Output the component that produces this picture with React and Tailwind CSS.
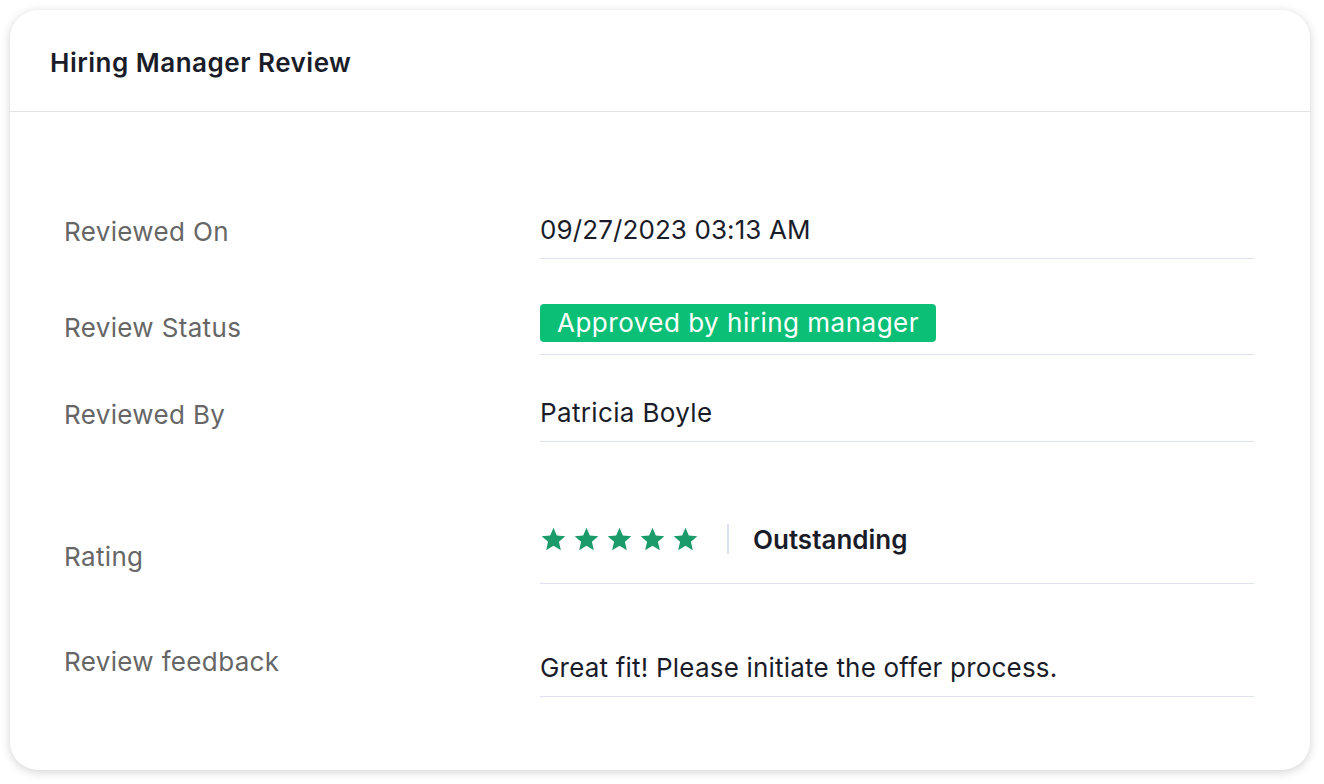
const Star = () => (
  <svg width="27" height="26" viewBox="0 0 24 24" fill="#1b9a6a">
    <path d="M12 1.5l3.1 7.2 7.8.7-5.9 5.2 1.8 7.7L12 18.2l-6.8 4.1 1.8-7.7L1.1 9.4l7.8-.7z" />
  </svg>
);

export default function App() {
  return (
    <div className="w-[1324px] h-[784px] bg-white p-[10px] font-['Inter',sans-serif]">
      <div className="w-[1300px] h-[760px] bg-white rounded-[28px] shadow-[0_2px_10px_rgba(0,0,0,0.18)] overflow-hidden">
        {/* Header */}
        <div className="h-[102px] border-b border-[#e3e3e3] px-[40px] pt-[4px] flex items-center">
          <h1 className="text-[26px] font-semibold text-[#1a1d29] tracking-[0.5px]">Hiring Manager Review</h1>
        </div>

        {/* Body */}
        <div className="pt-[88px] pl-[54px] pr-[56px] text-[26px] tracking-[0.35px]">
          <div className="flex">
            <div className="w-[476px] pt-[16px] leading-[32px] text-[#666]">Reviewed On</div>
            <div className="flex-1 pt-[14px] pb-[12px] border-b border-[#dde2ee] leading-[32px] text-[#1a1d29] tracking-[0.1px]">
              09/27/2023 03:13 AM
            </div>
          </div>

          <div className="flex">
            <div className="w-[476px] pt-[53px] leading-[32px] text-[#666]">Review Status</div>
            <div className="flex-1 pt-[44px] pb-[12px] border-b border-[#dde2ee]">
              <span className="inline-flex h-[38px] items-center rounded-[4px] bg-[#0bbf77] px-[17px] text-white leading-[32px] tracking-[0.5px]">
                Approved by hiring manager
              </span>
            </div>
          </div>

          <div className="flex">
            <div className="w-[476px] pt-[44px] leading-[32px] text-[#666]">Reviewed By</div>
            <div className="flex-1 pt-[42px] pb-[12px] border-b border-[#dde2ee] leading-[32px] text-[#1a1d29]">
              Patricia Boyle
            </div>
          </div>

          <div className="flex">
            <div className="w-[476px] pt-[99px] leading-[32px] text-[#666]">Rating</div>
            <div className="flex-1 pt-[81px] pb-[28px] border-b border-[#dde2ee]">
              <div className="flex h-[32px] items-center">
                <div className="flex gap-[6px]">
                  <Star />
                  <Star />
                  <Star />
                  <Star />
                  <Star />
                </div>
                <div className="ml-[28px] mr-[24px] h-[30px] w-[2px] bg-[#dde2ee]" />
                <span className="font-semibold text-[#1a1d29] tracking-normal">Outstanding</span>
              </div>
            </div>
          </div>

          <div className="flex">
            <div className="w-[476px] pt-[62px] leading-[32px] text-[#666]">Review feedback</div>
            <div className="flex-1 pt-[68px] pb-[12px] border-b border-[#dde2ee] leading-[32px] text-[#1a1d29] tracking-[0.2px]">
              Great fit! Please initiate the offer process.
            </div>
          </div>
        </div>
      </div>
    </div>
  );
}
